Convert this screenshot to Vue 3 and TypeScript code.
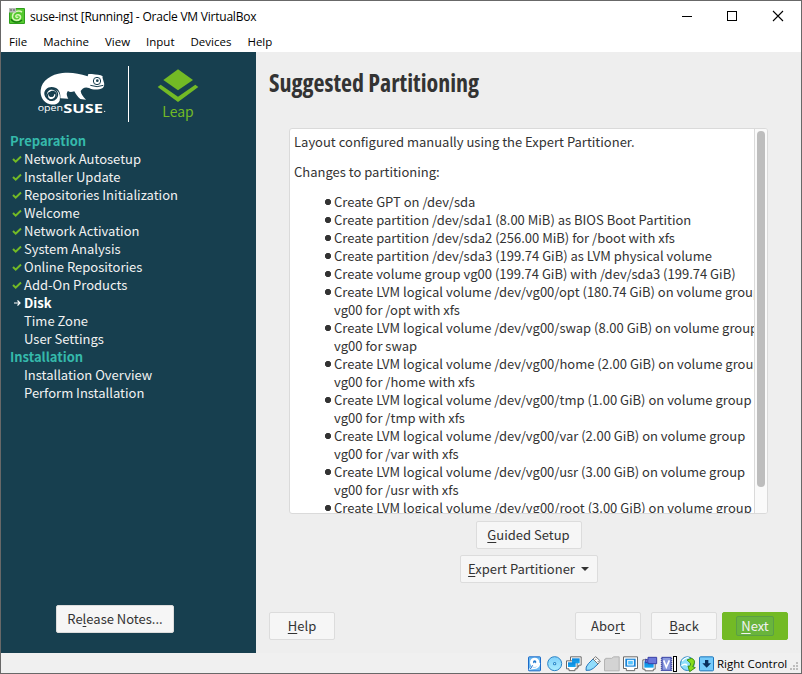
<script setup lang="ts">
interface Step { label: string; state: 'done' | 'current' | 'todo' }

const menus: string[] = ['File', 'Machine', 'View', 'Input', 'Devices', 'Help']

const preparation: Step[] = [
  { label: 'Network Autosetup', state: 'done' },
  { label: 'Installer Update', state: 'done' },
  { label: 'Repositories Initialization', state: 'done' },
  { label: 'Welcome', state: 'done' },
  { label: 'Network Activation', state: 'done' },
  { label: 'System Analysis', state: 'done' },
  { label: 'Online Repositories', state: 'done' },
  { label: 'Add-On Products', state: 'done' },
  { label: 'Disk', state: 'current' },
  { label: 'Time Zone', state: 'todo' },
  { label: 'User Settings', state: 'todo' },
]
const installation: Step[] = [
  { label: 'Installation Overview', state: 'todo' },
  { label: 'Perform Installation', state: 'todo' },
]
const groups = [
  { title: 'Preparation', steps: preparation },
  { title: 'Installation', steps: installation },
]

const changes: string[][] = [
  ['Create GPT on /dev/sda'],
  ['Create partition /dev/sda1 (8.00 MiB) as BIOS Boot Partition'],
  ['Create partition /dev/sda2 (256.00 MiB) for /boot with xfs'],
  ['Create partition /dev/sda3 (199.74 GiB) as LVM physical volume'],
  ['Create volume group vg00 (199.74 GiB) with /dev/sda3 (199.74 GiB)'],
  ['Create LVM logical volume /dev/vg00/opt (180.74 GiB) on volume group', 'vg00 for /opt with xfs'],
  ['Create LVM logical volume /dev/vg00/swap (8.00 GiB) on volume group', 'vg00 for swap'],
  ['Create LVM logical volume /dev/vg00/home (2.00 GiB) on volume group', 'vg00 for /home with xfs'],
  ['Create LVM logical volume /dev/vg00/tmp (1.00 GiB) on volume group', 'vg00 for /tmp with xfs'],
  ['Create LVM logical volume /dev/vg00/var (2.00 GiB) on volume group', 'vg00 for /var with xfs'],
  ['Create LVM logical volume /dev/vg00/usr (3.00 GiB) on volume group', 'vg00 for /usr with xfs'],
  ['Create LVM logical volume /dev/vg00/root (3.00 GiB) on volume group'],
]
</script>

<template>
  <div class="window">
    <header class="titlebar">
      <svg class="app-icon" viewBox="0 0 16 16">
        <rect width="16" height="16" rx="1" fill="#2f9e1c" />
        <rect x="1" y="1" width="14" height="14" fill="#55c92f" />
        <path d="M13 4C9 1.5 3.5 4 3.5 8.5c0 4.500 7 5 8 1.200C12 6.500 7 5.500 6.800 8.300c0 1.500 2 1.500 2.200.4" fill="none" stroke="#d9f7b8" stroke-width="1.500" />
        <path d="M2 11c2 4 8 4 11 1" fill="none" stroke="#16780f" stroke-width="1.300" />
        <rect width="7" height="4.500" fill="#b9bdb9" /><path d="M1 2h2M4 2h2" stroke="#555" />
      </svg>
      <span class="caption">suse-inst [Running] - Oracle VM VirtualBox</span>
      <svg class="controls" viewBox="0 0 104 12">
        <path d="M1 6.500h10" stroke="#000" />
        <rect x="46.500" y="1.500" width="9" height="9" fill="none" stroke="#000" />
        <path d="M92 1l10 10M102 1L92 11" stroke="#000" stroke-width="1.100" />
      </svg>
    </header>
    <nav class="menubar">
      <span v-for="m in menus" :key="m" :class="'m-' + m.toLowerCase()">{{ m }}</span>
    </nav>

    <div class="guest">
      <aside class="sidebar">
        <svg class="brand" viewBox="0 0 765 264">
          <g fill="#fff">
            <path d="M176 140C172 149 160 154 147 151C127 146 117 128 119 109C122 79 151 61 184 57C211 54 232 58 260 67L262 60C277 60 289 62 299 64L305 67C303 72 307 77 308 83C311 90 310 97 305 102C292 108 276 108 264 102C252 97 244 103 239 111C240 120 246 128 255 137L238 135C230 129 224 119 220 112C212 115 205 115 201 111C195 117 197 126 202 134L178 133C180 110 168 99 152 99C138 99 129 109 130 121C132 134 145 143 156 139C168 135 172 119 161 112C151 107 140 116 144 125C147 132 159 130 158 121L163 121C164 132 153 139 144 134C132 128 137 108 153 106C172 104 180 121 176 140Z" />
          </g>
          <path d="M135 119C135 103 157 99 167 113C175 127 161 143 147 138C136 134 137 118 148 115C157 113 161 124 153 127" fill="none" stroke="#173f4f" stroke-width="4" />
          <circle cx="288" cy="81" r="11" fill="#fff" stroke="#173f4f" stroke-width="3" />
          <circle cx="289" cy="80" r="4" fill="#173f4f" />
          <path d="M268 94Q289 102 307 94" fill="none" stroke="#173f4f" stroke-width="3" />
          <text x="110" y="172" class="open" textLength="76" lengthAdjust="spacingAndGlyphs">open</text>
          <text x="187" y="176" class="suse" textLength="119" lengthAdjust="spacingAndGlyphs">SUSE</text>
          <circle cx="311" cy="172" r="2" fill="#fff" />
          <rect x="381" y="36" width="3" height="168" fill="#fff" />
          <g fill="#73ba25">
            <path d="M531 46L576 78L531 109L487 78Z" />
            <path d="M479 92L531 128L583 92L592 99L531 144L470 99Z" />
          </g>
          <text x="484" y="188" class="leap" textLength="94" lengthAdjust="spacingAndGlyphs">Leap</text>
        </svg>
        <section v-for="g in groups" :key="g.title" class="group">
          <h2>{{ g.title }}</h2>
          <ul>
            <li v-for="s in g.steps" :key="s.label" :class="s.state">
              <svg v-if="s.state === 'done'" class="mark" viewBox="0 0 10 10"><path d="M1 5l2.700 2.700L9 2.500" fill="none" stroke="#73ba25" stroke-width="2" /></svg>
              <svg v-else-if="s.state === 'current'" class="mark" viewBox="0 0 10 10"><path d="M2 5h6M5.500 2.500L8 5L5.500 7.500" fill="none" stroke="#fff" stroke-width="1.200" /></svg>
              <span v-else class="mark"></span>
              <span>{{ s.label }}</span>
            </li>
          </ul>
        </section>
        <button class="btn notes"><span>Re<u>l</u>ease Notes...</span></button>
      </aside>

      <main class="content">
        <h1><span>Suggested Partitioning</span></h1>
        <div class="report">
          <div class="text">
            <p>Layout configured manually using the Expert Partitioner.</p>
            <p>Changes to partitioning:</p>
            <ul>
              <li v-for="(c, i) in changes" :key="i">
                <div v-for="line in c" :key="line">{{ line }}</div>
              </li>
            </ul>
          </div>
          <div class="scrollbar"><div class="thumb"></div></div>
        </div>
        <div class="actions">
          <button class="btn guided"><span><u>G</u>uided Setup</span></button>
          <button class="btn expert"><span><u>E</u>xpert Partitioner</span><i class="caret"></i></button>
        </div>
        <footer class="wizard">
          <button class="btn help"><span><u>H</u>elp</span></button>
          <button class="btn abort"><span>Abo<u>r</u>t</span></button>
          <button class="btn back"><span><u>B</u>ack</span></button>
          <button class="btn next"><span><u>N</u>ext</span></button>
        </footer>
      </main>
    </div>

    <footer class="statusbar">
      <svg class="devices" viewBox="21 21 564 63">
        <defs>
          <linearGradient id="sky" x1="0" y1="0" x2="0" y2="1"><stop offset="0" stop-color="#7fd0fb" /><stop offset="1" stop-color="#a9ecff" /></linearGradient>
          <linearGradient id="scr" x1="0" y1="0" x2="0" y2="1"><stop offset="0" stop-color="#0a84dc" /><stop offset="1" stop-color="#18a8f0" /></linearGradient>
        </defs>
        <rect x="25.500" y="32.500" width="36" height="42" rx="2" fill="#6bb9f3" stroke="#1d6bc8" stroke-width="3" />
        <circle cx="44" cy="49" r="14" fill="#fff" /><circle cx="44" cy="48" r="5" fill="#2078ce" /><path d="M46 50L31 68L48 66Q58 62 58 51" fill="none" stroke="#fff" stroke-width="5" />
        <path d="M38 58L31 69" stroke="#1d6bc8" stroke-width="3" />
        <circle cx="104" cy="53" r="21" fill="url(#sky)" stroke="#2a83c6" stroke-width="3" /><circle cx="104" cy="53" r="5" fill="#2a83c6" /><circle cx="104" cy="53" r="2" fill="#dff" />
        <g stroke="#686868" stroke-width="3" fill="#fff"><path d="M151.500 32.500H183.500V57.500H176V63H160V57.500H151.500Z" /><path d="M139.500 44.500H171.500V68.500H165V74H147V68.500H139.500Z" /></g>
        <rect x="156" y="37" width="23" height="15" fill="url(#scr)" /><rect x="144" y="49" width="23" height="14" fill="url(#scr)" />
        <path d="M198 73Q196 63 205 53L219 39L234 54L220 67Q211 75 198 73Z" fill="#91dcfb" stroke="#2477bd" stroke-width="3" />
        <path d="M219 39L227 32L241 45L234 54Z" fill="#fff" stroke="#777" stroke-width="3" /><path d="M226 40h3M233 46h3" stroke="#555" stroke-width="3" />
        <path d="M253.500 74.500V40H257V37H275L281 32.500H297.500V74.500Z" fill="#d3d3d3" stroke="#b4b4b4" stroke-width="3" />
        <path d="M310.500 32.500H352.500V67.500H344V74H319V67.500H310.500Z" fill="#fff" stroke="#686868" stroke-width="3" />
        <rect x="316" y="38" width="31" height="24" fill="#1784d8" /><rect x="323" y="43" width="17" height="14" fill="#55c4ff" stroke="#fff" stroke-width="3" />
        <path d="M368.500 41.500H405.500V69.500H400V74.500H375V69.500H368.500Z" fill="#fff" stroke="#686868" stroke-width="3" />
        <rect x="373" y="46" width="28" height="19" fill="url(#scr)" /><path d="M377 39L384 43V34H410V53H384V47L377 51Z" fill="#6c78da" stroke="#3940a7" stroke-width="3" />
        <rect x="426" y="34" width="27" height="39" fill="#8b9bdf" stroke="#3942a4" stroke-width="3" /><path d="M424 36v39M455 36v39" stroke="#3942a4" stroke-width="3" stroke-dasharray="3 3" />
        <path d="M431 43L439 63L448 43" fill="none" stroke="#fff" stroke-width="5" />
        <rect x="460.500" y="31.500" width="9" height="45" fill="#fff" stroke="#000" stroke-width="3" />
        <circle cx="502" cy="53" r="20.500" fill="#8fe0fb" stroke="#2680be" stroke-width="3" /><path d="M486 45q12-12 20-10M484 59q12-8 17-1" stroke="#fff" stroke-width="4" fill="none" />
        <path d="M501 42L514 37Q527 41 522 54L518 62L526 65L509 77L504 60L509 61Q515 53 509 49Z" fill="#86dc1d" stroke="#3e8f14" stroke-width="3" />
        <rect x="538.500" y="32.500" width="42" height="42" rx="3" fill="#75cafa" stroke="#1c76bd" stroke-width="3" /><path d="M555 42H565V52H573L560 65L547 52H555Z" fill="#092f5d" />
      </svg>
      <span class="hostkey">Right Control</span>
      <svg class="grip" viewBox="0 0 8 8" fill="#bdbdbd"><path d="M6 0h2v2H6zM3 3h2v2H3zM6 3h2v2H6zM0 6h2v2H0zM3 6h2v2H3zM6 6h2v2H6z" /></svg>
    </footer>
  </div>
</template>

<style>
body { margin: 0; overflow: hidden; }
</style>

<style scoped>
* { box-sizing: border-box; }
ul, p, h1, h2 { margin: 0; padding: 0; list-style: none; }
.window { width: 802px; height: 674px; border: 1px solid #686868; background: #fff; display: flex; flex-direction: column; font-family: "Noto Sans CJK SC", "Source Sans Pro", sans-serif; font-size: 13px; color: #333; white-space: nowrap; }
.titlebar { height: 30px; display: flex; align-items: center; padding: 0 13px 0 8px; font: 12px "Open Sans", sans-serif; color: #000; }
.app-icon { width: 16px; height: 16px; margin-right: 5px; }
.caption { letter-spacing: -0.22px; }
.controls { width: 104px; height: 12px; margin-left: auto; margin-right: 3px; }
.menubar { height: 21px; display: flex; gap: 16px; padding-left: 8px; line-height: 21px; font-family: "Open Sans", sans-serif; font-size: 11.500px; color: #000; }
.guest { height: 601px; display: flex; background: #eee; }
.sidebar { width: 255px; height: 601px; background: #173f4f; display: flex; flex-direction: column; color: #f2f2f2; }
.brand { width: 255px; height: 88px; margin-top: 2px; margin-bottom: -10px; flex: none; }
.open { font: 29px "Open Sans", sans-serif; fill: #fff; }
.suse { font: bold 38px "Open Sans", sans-serif; fill: #fff; }
.leap { font: 42px "Noto Sans CJK SC", sans-serif; fill: #73ba25; }
.group h2 { height: 18px; line-height: 18px; font-size: 13px; font-weight: 700; color: #35b9ab; padding-left: 9px; }
.group li { height: 18px; line-height: 18px; display: flex; align-items: center; padding-left: 11px; }
.group li.current { font-weight: 700; color: #fff; }
.mark { width: 10px; height: 10px; margin-right: 2px; flex: none; }
.btn { height: 28px; padding: 0; border: 1px solid #dcdcdc; border-radius: 2px; background: #f6f6f6; color: #333; font: inherit; line-height: 26px; display: flex; align-items: center; justify-content: center; flex: none; }
.btn u { text-decoration: underline; text-underline-offset: 2px; text-decoration-thickness: 1px; text-decoration-skip-ink: none; }
.notes { width: 118px; margin: auto 0 20px 55px; }
.content { width: 545px; display: flex; flex-direction: column; padding: 0 13px 13px; }
h1 { height: 76px; line-height: 62px; font: 700 24px/62px "Open Sans", sans-serif; font-stretch: 75%; }
.report { width: 479px; height: 386px; margin-left: 20px; border: 1px solid #dadada; border-radius: 3px; background: #fff; display: flex; overflow: hidden; }
.text { flex: 1; padding: 4px 0 0 4px; line-height: 18px; overflow: hidden; }
.text p { margin-bottom: 12px; }
.text li { padding-left: 40px; background: radial-gradient(circle at 34px 9px, #333 2.800px, transparent 3.400px); }
.scrollbar { width: 13px; border-left: 1px solid #dadada; background: #fafafa; padding: 2px 0 0 2px; }
.thumb { width: 8px; height: 356px; border-radius: 4px; background: #bdbdbd; }
.actions { width: 479px; margin: 7px 0 0 20px; display: flex; flex-direction: column; align-items: center; gap: 6px; }
.guided { width: 106px; }
.expert { width: 138px; }
.caret { border: 4px solid transparent; border-top-color: #333; border-bottom: 0; margin-left: 6px; }
.wizard { display: flex; margin-top: auto; }
.wizard .btn { width: 66px; }
.abort { margin-left: 240px; }
.back { margin-left: 10px; }
.next { margin-left: 5px; background: #73ba25; border-color: #73ba25; color: #f2f2f2; }
.next span { width: 38px; height: 20px; line-height: 18px; border: 1px solid #5b9f45; border-radius: 2px; background: #69b53c; }
.statusbar { height: 20px; background: #f0f0f0; display: flex; align-items: center; padding-left: 526px; color: #000; font: 11.500px "Open Sans", sans-serif; }
.devices { width: 188px; height: 21px; flex: none; }
.hostkey { margin-left: 2px; }
.grip { width: 8px; height: 8px; margin: 6px 3px 0 auto; }
</style>
